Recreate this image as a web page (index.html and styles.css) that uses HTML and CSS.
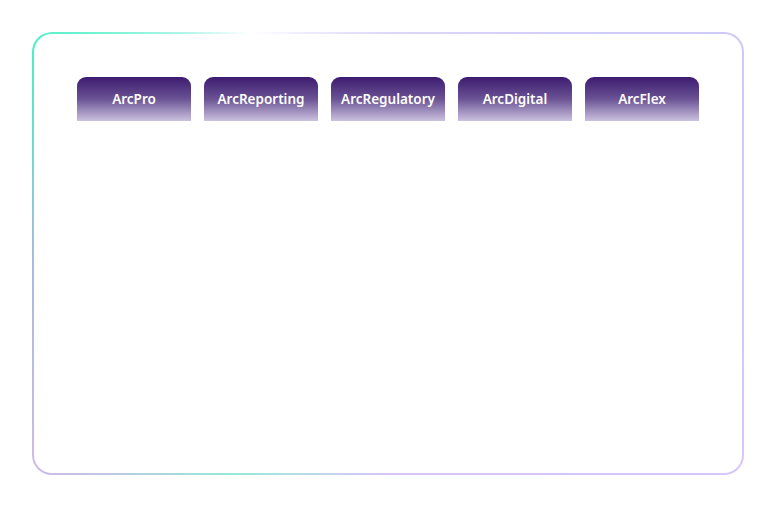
FILE: index.html
```html
<!DOCTYPE html>
<html lang="en">
<head>
    <meta charset="UTF-8">
    <meta name="viewport" content="width=device-width, initial-scale=1.0">
    <title>Arc Products</title>
    <link rel="stylesheet" href="styles.css">
</head>
<body>

<div class="frame">
    <!-- Abas de produtos -->
    <div class="tabs">
        <div class="tab">ArcPro</div>
        <div class="tab">ArcReporting</div>
        <div class="tab">ArcRegulatory</div>
        <div class="tab">ArcDigital</div>
        <div class="tab">ArcFlex</div>
    </div>
</div>

</body>
</html>
```

FILE: styles.css
```css
* {
    margin: 0;
    padding: 0;
    box-sizing: border-box;
    font-family: "Noto Sans", Arial, sans-serif;
}
body {
    background: #fff;
    padding: 32px 34px 33px 32px;
}
.frame {
    height: 443px;
    border: 2px solid transparent;
    border-radius: 20px;
    background:
        linear-gradient(#fff, #fff) padding-box,
        conic-gradient(from 0deg at 50% 50%,
            #dcd8fb 0deg,
            #cdc9fa 58deg,
            #d6c6fa 122deg,
            #d8c4f6 180deg,
            #b8dce8 202deg,
            #92ead8 216deg,
            #cdbce6 238deg,
            #a9b9e0 268deg,
            #48f0c6 300deg,
            #b8f6ea 318deg,
            #ffffff 328deg,
            #eeebfd 340deg,
            #dcd8fb 360deg) border-box;
    padding-top: 43px;
}
.tabs {
    display: flex;
    justify-content: center;
    gap: 13px;
}
.tab {
    width: 114px;
    height: 44px;
    display: flex;
    align-items: center;
    justify-content: center;
    color: #fff;
    font-size: 13.5px;
    font-weight: 600;
    border-radius: 9px 9px 0 0;
    background: linear-gradient(#3d1b70, #6a5394 50%, #cbc1e0);
}
```
